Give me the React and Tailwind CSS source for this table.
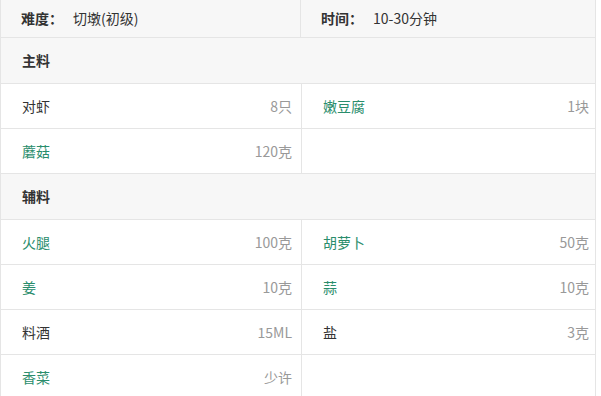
const main = [
  [{ name: "对虾", amount: "8只" }, { name: "嫩豆腐", amount: "1块", link: true }],
  [{ name: "蘑菇", amount: "120克", link: true }, null],
];

const sub = [
  [{ name: "火腿", amount: "100克", link: true }, { name: "胡萝卜", amount: "50克", link: true }],
  [{ name: "姜", amount: "10克", link: true }, { name: "蒜", amount: "10克", link: true }],
  [{ name: "料酒", amount: "15ML" }, { name: "盐", amount: "3克" }],
  [{ name: "香菜", amount: "少许", link: true }, null],
];

function Cell({ item, right }) {
  return (
    <div
      className={`flex items-center justify-between pl-[21px] ${
        right ? "pr-[6px]" : "pr-[9px] border-r border-[#e5e5e5]"
      }`}
    >
      {item && (
        <>
          <span className={item.link ? "text-[#2a8d6c]" : "text-[#333]"}>{item.name}</span>
          <span className="text-[#999]">{item.amount}</span>
        </>
      )}
    </div>
  );
}

function Row({ pair }) {
  return (
    <div className="grid grid-cols-[301px_1fr] h-[45px] border-b border-[#e5e5e5] bg-white">
      <Cell item={pair[0]} />
      <Cell item={pair[1]} right />
    </div>
  );
}

function Section({ title }) {
  return (
    <div className="h-[46px] flex items-center pl-[21px] bg-[#f7f7f7] border-b border-[#e5e5e5] font-bold text-[#333]">
      {title}
    </div>
  );
}

export default function App() {
  return (
    <div
      className="w-[601px] h-[396px] overflow-hidden bg-white text-[14px]"
      style={{ fontFamily: '"Noto Sans CJK SC", "Noto Sans", sans-serif' }}
    >
      <div className="w-[596px] border-l border-r border-[#e5e5e5]">
        <div className="grid grid-cols-[300px_1fr] h-[38px] bg-[#f7f7f7] border-b border-[#e5e5e5] text-[#333]">
          <div className="flex items-center pl-[20px] border-r border-[#e5e5e5]">
            <span className="font-bold w-[52px]">难度：</span>
            <span>切墩(初级)</span>
          </div>
          <div className="flex items-center pl-[20px]">
            <span className="font-bold w-[52px]">时间：</span>
            <span>10-30分钟</span>
          </div>
        </div>
        <Section title="主料" />
        {main.map((p, i) => (
          <Row key={i} pair={p} />
        ))}
        <Section title="辅料" />
        {sub.map((p, i) => (
          <Row key={i} pair={p} />
        ))}
      </div>
    </div>
  );
}
